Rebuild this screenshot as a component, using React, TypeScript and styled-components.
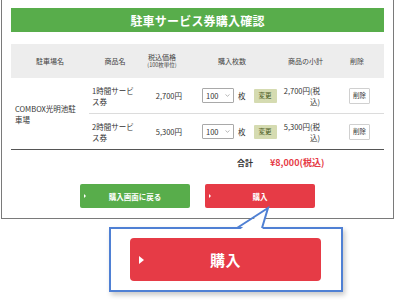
import React from "react"
import styled, {createGlobalStyle} from "styled-components"

const GlobalStyle = createGlobalStyle`
    html, body {
        margin: 0;
        padding: 0;
        background: #ffffff;
    }
    body {
        font-family: "Noto Sans CJK JP", "Liberation Sans", sans-serif;
        color: #333;
    }
`;

const Page = styled.div`
    width: 395px;
    height: 306px;
    overflow: hidden;
`;

const Frame = styled.div`
    margin-left: 1px;
    width: 393px;
    box-sizing: border-box;
    border: 1.5px solid #7a7a7a;
    border-top: none;
    padding: 8px 9px 10px 9px;
`;

const TitleBar = styled.h1`
    margin: 0;
    height: 24px;
    background: #58ad4b;
    color: #fff;
    font-size: 12px;
    font-weight: 700;
    display: flex;
    align-items: center;
    justify-content: center;
    letter-spacing: 0.2px;
`;

const Table = styled.table`
    margin-top: 12px;
    width: 373px;
    table-layout: fixed;
    border-collapse: collapse;
    font-size: 7.5px;
    line-height: 11px;
    border-bottom: 1px solid #555;
`;

const HeadCell = styled.th`
    background: #ededed;
    height: 34px;
    padding: 0;
    font-weight: 400;
    font-size: 7px;
    color: #444;
    text-align: center;
    line-height: 9px;
`;

const SmallNote = styled.span`
    display: block;
    font-size: 5.5px;
    line-height: 7px;
`;

const Cell = styled.td<{$align?: string; $pl?: number; $pr?: number; $top?: boolean}>`
    height: 35px;
    padding: 0 ${(p) => p.$pr ?? 0}px 0 ${(p) => p.$pl ?? 0}px;
    text-align: ${(p) => p.$align ?? "left"};
    vertical-align: middle;
    border-top: ${(p) => (p.$top ? "1px solid #dcdcdc" : "none")};
    color: #333;
`;

const QtyWrap = styled.div`
    display: flex;
    align-items: center;
    padding-left: 19px;
`;

const SelectBox = styled.div`
    width: 32px;
    height: 15px;
    box-sizing: border-box;
    border: 1px solid #a9a9a9;
    border-radius: 1px;
    display: flex;
    align-items: center;
    justify-content: space-between;
    padding: 0 3px 0 3px;
    font-size: 7.5px;
    background: #fff;
`;

const Unit = styled.span`
    margin-left: 4px;
`;

const ChangeButton = styled.span`
    margin-left: 8px;
    width: 23px;
    height: 14px;
    background: #d5dbb1;
    color: #4a5a22;
    font-size: 6.5px;
    display: flex;
    align-items: center;
    justify-content: center;
    border-radius: 1px;
`;

const DeleteButton = styled.span`
    display: inline-flex;
    align-items: center;
    justify-content: center;
    width: 21px;
    height: 16px;
    box-sizing: border-box;
    border: 1px solid #d0d0d0;
    border-radius: 1px;
    background: #fff;
    font-size: 6.5px;
    color: #333;
`;

const TotalRow = styled.div`
    display: flex;
    align-items: center;
    height: 25px;
    padding-left: 226px;
    font-weight: 700;
`;

const TotalLabel = styled.span`
    font-size: 8px;
    color: #333;
    width: 33px;
`;

const TotalValue = styled.span`
    font-size: 9px;
    color: #e63b46;
`;

const ButtonRow = styled.div`
    display: flex;
    justify-content: center;
    gap: 15px;
    margin-top: 9px;
`;

const ActionButton = styled.div<{$color: string}>`
    position: relative;
    width: 110px;
    height: 24px;
    border-radius: 2px;
    background: ${(p) => p.$color};
    color: #fff;
    font-size: 7.5px;
    font-weight: 700;
    display: flex;
    align-items: center;
    justify-content: center;
`;

const Arrow = styled.span<{$size: number}>`
    position: absolute;
    left: ${(p) => p.$size * 2}px;
    top: 50%;
    transform: translateY(-50%);
    width: 0;
    height: 0;
    border-top: ${(p) => p.$size}px solid transparent;
    border-bottom: ${(p) => p.$size}px solid transparent;
    border-left: ${(p) => p.$size * 1.3}px solid #fff;
`;

const Callout = styled.div`
    position: relative;
    margin: 8px 0 0 109px;
    width: 234px;
    box-sizing: border-box;
    border: 2px solid #4f80d4;
    background: #fff;
    padding: 9px 20px 9px 19px;
    box-shadow: 2px 3px 5px rgba(0, 0, 0, 0.22);
`;

const Tail = styled.svg`
    position: absolute;
    left: 124px;
    top: -24px;
`;

const BigButton = styled.div`
    position: relative;
    height: 43px;
    border-radius: 4px;
    background: #e63b46;
    color: #fff;
    font-size: 15px;
    font-weight: 700;
    display: flex;
    align-items: center;
    justify-content: center;
    letter-spacing: 0.5px;
`;

const items = [
    {name: "1時間サービス券", price: "2,700円", subtotal: "2,700円(税込)"},
    {name: "2時間サービス券", price: "5,300円", subtotal: "5,300円(税込)"},
];

const Chevron = () => (
    <svg width="5" height="3" viewBox="0 0 5 3">
        <path d="M0.5 0.5 L2.5 2.3 L4.5 0.5" fill="none" stroke="#999" strokeWidth="0.7" />
    </svg>
);

const App: React.FC = () => {
    return (
        <Page>
            <GlobalStyle />
            <Frame>
                <TitleBar>駐車サービス券購入確認</TitleBar>
                <Table>
                    <colgroup>
                        <col style={{width: 78}} />
                        <col style={{width: 52}} />
                        <col style={{width: 42}} />
                        <col style={{width: 98}} />
                        <col style={{width: 49}} />
                        <col style={{width: 54}} />
                    </colgroup>
                    <thead>
                        <tr>
                            <HeadCell>駐車場名</HeadCell>
                            <HeadCell>商品名</HeadCell>
                            <HeadCell>税込価格<SmallNote>(100枚単位)</SmallNote></HeadCell>
                            <HeadCell>購入枚数</HeadCell>
                            <HeadCell>商品の小計</HeadCell>
                            <HeadCell>削除</HeadCell>
                        </tr>
                    </thead>
                    <tbody>
                        {items.map((item, i) => (
                            <tr key={item.name}>
                                {i === 0 && (
                                    <Cell rowSpan={2} $pl={4} $pr={10}>COMBOX光明池駐車場</Cell>
                                )}
                                <Cell $pl={3} $pr={5} $top={i > 0}>{item.name}</Cell>
                                <Cell $align="right" $pr={1} $top={i > 0}>{item.price}</Cell>
                                <Cell $top={i > 0}>
                                    <QtyWrap>
                                        <SelectBox>100<Chevron /></SelectBox>
                                        <Unit>枚</Unit>
                                        <ChangeButton>変更</ChangeButton>
                                    </QtyWrap>
                                </Cell>
                                <Cell $align="right" $pl={2} $pr={10} $top={i > 0}>{item.subtotal}</Cell>
                                <Cell $align="center" $pl={5} $top={i > 0}>
                                    <DeleteButton>削除</DeleteButton>
                                </Cell>
                            </tr>
                        ))}
                    </tbody>
                </Table>
                <TotalRow>
                    <TotalLabel>合計</TotalLabel>
                    <TotalValue>¥8,000(税込)</TotalValue>
                </TotalRow>
                <ButtonRow>
                    <ActionButton $color="#58ad4b"><Arrow $size={2} />購入画面に戻る</ActionButton>
                    <ActionButton $color="#e63b46"><Arrow $size={2} />購入</ActionButton>
                </ButtonRow>
            </Frame>
            <Callout>
                <Tail width="36" height="26" viewBox="0 0 36 26">
                    <polygon points="3,26 33,3 27,26" fill="#fff" />
                    <polyline points="2,23 33,3 27,23" fill="none" stroke="#4f80d4" strokeWidth="2" />
                </Tail>
                <BigButton><Arrow $size={4.5} />購入</BigButton>
            </Callout>
        </Page>
    )
}

export default App;
